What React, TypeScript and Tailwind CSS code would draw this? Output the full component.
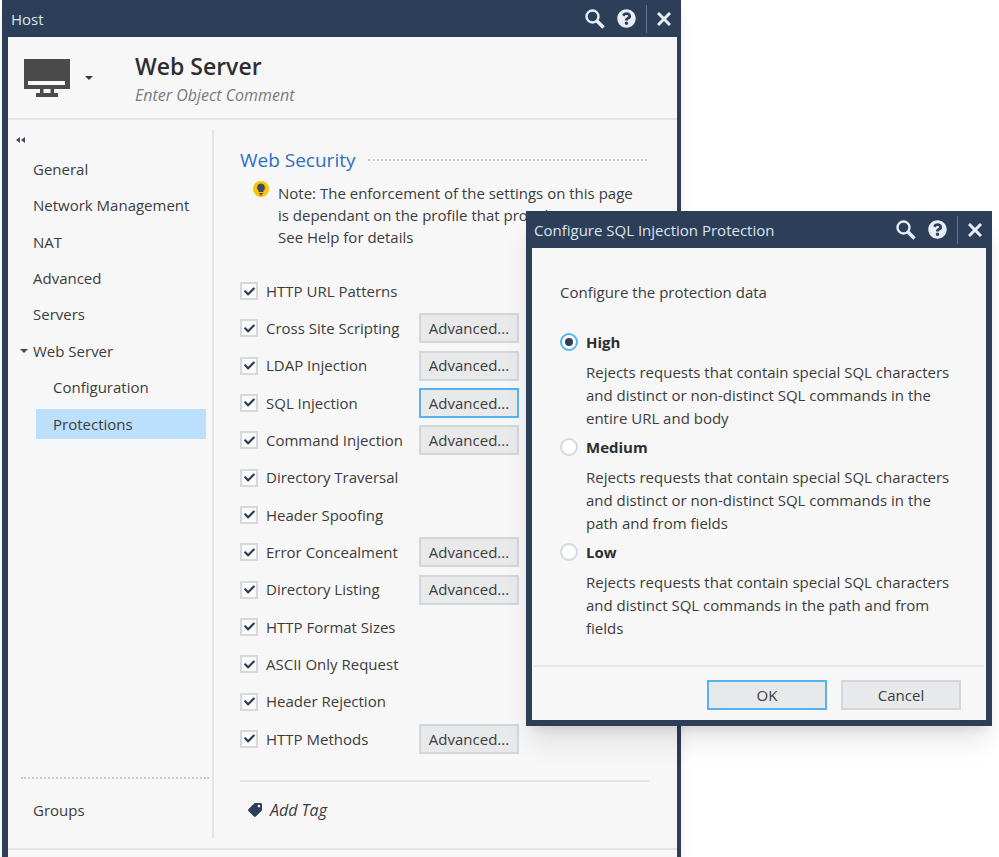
import { FaCheck, FaQuestionCircle, FaTag } from 'react-icons/fa';

const font = { fontFamily: "'Open Sans', sans-serif" };

const navTop = ['General', 'Network Management', 'NAT', 'Advanced', 'Servers'];

const protections = [
  { label: 'HTTP URL Patterns' },
  { label: 'Cross Site Scripting', advanced: true },
  { label: 'LDAP Injection', advanced: true },
  { label: 'SQL Injection', advanced: true, focused: true },
  { label: 'Command Injection', advanced: true },
  { label: 'Directory Traversal' },
  { label: 'Header Spoofing' },
  { label: 'Error Concealment', advanced: true },
  { label: 'Directory Listing', advanced: true },
  { label: 'HTTP Format Sizes' },
  { label: 'ASCII Only Request' },
  { label: 'Header Rejection' },
  { label: 'HTTP Methods', advanced: true },
];

const levels = [
  {
    name: 'High',
    selected: true,
    lines: [
      'Rejects requests that contain special SQL characters',
      'and distinct or non-distinct SQL commands in the',
      'entire URL and body',
    ],
  },
  {
    name: 'Medium',
    lines: [
      'Rejects requests that contain special SQL characters',
      'and distinct or non-distinct SQL commands in the',
      'path and from fields',
    ],
  },
  {
    name: 'Low',
    lines: [
      'Rejects requests that contain special SQL characters',
      'and distinct SQL commands in the path and from',
      'fields',
    ],
  },
];

const TitleIcons = () => (
  <div className="flex items-center text-[#e8eef7]">
    <svg width="20" height="20" viewBox="0 0 20 20" fill="none" stroke="currentColor">
      <circle cx="7.5" cy="7.5" r="6" strokeWidth="2.4" />
      <path d="M12 12l6.5 6.5" strokeWidth="3.6" />
    </svg>
    <FaQuestionCircle size={19} className="ml-3" />
    <div className="mx-2.5 h-7 w-px bg-slate-500" />
    <svg width="14" height="14" viewBox="0 0 14 14" fill="none" stroke="currentColor" strokeWidth="3">
      <path d="M1 1l12 12M13 1L1 13" />
    </svg>
  </div>
);

const Caret = () => <div className="border-x-4 border-t-4 border-x-transparent border-t-[#3a3a3a]" />;

const Monitor = () => (
  <svg width="46" height="38" viewBox="0 0 46 38">
    <path d="M0 0h46v30H0zM16 30h14v4h4v4H12v-4h4z" fill="#4a4a4a" />
    <path d="M4 22h37v4H4zM19.5 30h7v4h-7z" fill="#f7f7f7" />
  </svg>
);

const Bulb = () => (
  <svg width="16" height="16" viewBox="0 0 16 16">
    <circle cx="8" cy="8" r="8" fill="#fdc400" />
    <path d="M8 2.5a4 4 0 0 0-2.4 7.2V11h4.8V9.7A4 4 0 0 0 8 2.5z" fill="#3f4a5a" />
    <path d="M6 12h4v1H6zM6.8 13.6h2.4v1H6.8z" fill="#3f4a5a" />
  </svg>
);

const CollapseArrows = () => (
  <svg width="9" height="6" viewBox="0 0 9 6" fill="#3f4a5a">
    <path d="M4 0v6L0 3zM9 0v6L5 3z" />
  </svg>
);

const Checkbox = () => (
  <div className="flex size-4.5 shrink-0 items-center justify-center border-2 border-[#d5d9df] bg-[#fafafa] text-[#2c3e58]">
    <FaCheck size={11} />
  </div>
);

const Button = ({ children, focused, className }: { children: string; focused?: boolean; className: string }) => (
  <button
    className={`h-7.5 border-2 bg-[#e8e9eb] text-[#3c3c3c] ${
      focused ? 'border-[#55b4f0]' : 'border-[#d3d6da]'
    } ${className}`}
  >
    {children}
  </button>
);

const HostWindow = () => (
  <div className="absolute top-0 bottom-0 left-0.5 flex w-169.75 flex-col border-r-4 border-l-6 border-[#2c3e58] bg-[#f7f7f7] shadow-lg">
    <div className="-mr-1 -ml-1.5 flex h-9.25 shrink-0 items-center justify-between bg-[#2c3e58] pr-2.5 pl-2.25">
      <span className="pt-0.5 text-[#dde4ee]">Host</span>
      <TitleIcons />
    </div>

    <div className="flex h-20.75 shrink-0 items-center border-b-2 border-[#e2e5e9] pl-4">
      <Monitor />
      <div className="mr-10.5 ml-3.75">
        <Caret />
      </div>
      <div className="pt-0.5">
        <h1 className="text-[23px] leading-8 font-semibold text-[#2e2e2e]">Web Server</h1>
        <p className="mt-px text-base leading-6 text-[#7a7a7a] italic">Enter Object Comment</p>
      </div>
    </div>

    <div className="mt-2.5 flex min-h-0 flex-1 flex-col">
      <div className="flex h-177">
        <aside className="flex w-51.5 shrink-0 flex-col border-r-2 border-[#e2e5e9] pt-1">
          <div className="flex h-3 items-center pl-2">
            <CollapseArrows />
          </div>
          <nav className="mt-1.25 mr-1.5 grid h-72.75 grid-rows-8 items-center text-[#3c3c3c]">
            {navTop.map((item) => (
              <div key={item} className="pl-6.25">
                {item}
              </div>
            ))}
            <div className="flex items-center pl-3">
              <div className="mr-1.25 border-x-4 border-t-4 border-x-transparent border-t-[#3f4a5a]" />
              Web Server
            </div>
            <div className="pl-11.25">Configuration</div>
            <div className="ml-7 flex h-7.5 items-center bg-[#bbe0fd] pl-4.25">Protections</div>
          </nav>
          <div className="mt-auto mr-0.75 ml-3.25 border-t-2 border-dotted border-[#c5cad2]" />
          <div className="flex h-14.75 items-center pt-1 pl-6.25 text-[#3c3c3c]">Groups</div>
        </aside>

        <section className="flex min-w-0 flex-1 flex-col pt-4.5 pr-7 pl-6.5">
          <div className="flex items-center">
            <h2 className="text-[19px] leading-6 text-[#2f6fc0]">Web Security</h2>
            <div className="mr-0.5 ml-3.25 flex-1 border-t-2 border-dotted border-[#c5cad2]" />
          </div>
          <div className="mt-2.5 flex pl-3.25 leading-5.5 text-[#3c3c3c]">
            <div className="mr-2.25 -mt-0.25 shrink-0">
              <Bulb />
            </div>
            <p className="whitespace-nowrap">
              Note: The enforcement of the settings on this page
              <br />
              is dependant on the profile that provides
              <br />
              See Help for details
            </p>
          </div>
          <div className="mt-7 flex flex-1 flex-col justify-between text-[#3c3c3c]">
            {protections.map((item) => (
              <div key={item.label} className="flex h-7.5 items-center">
                <Checkbox />
                <span className="ml-2 w-38.25 whitespace-nowrap">{item.label}</span>
                {item.advanced && (
                  <Button focused={item.focused} className="w-25">
                    Advanced...
                  </Button>
                )}
              </div>
            ))}
          </div>
          <div className="mt-6.5 border-t-2 border-[#e2e5e9]" />
          <div className="flex h-14 items-center pl-2 text-base text-[#3c3c3c] italic">
            <FaTag size={14} className="mr-2 -scale-x-100 text-[#2c3e58]" />
            Add Tag
          </div>
        </section>
      </div>
      <div className="mt-2.5 border-t-2 border-[#e2e5e9]" />
    </div>
  </div>
);

const SqlDialog = () => (
  <div className="absolute top-52.75 left-131.5 flex h-128.75 w-116.5 flex-col border-x-6 border-b-6 border-[#2c3e58] bg-[#f7f7f7] shadow-xl">
    <div className="-mx-1.5 flex h-9.25 shrink-0 items-center justify-between bg-[#2c3e58] pr-2.5 pl-2">
      <span className="pt-0.5 text-[#dde4ee]">Configure SQL Injection Protection</span>
      <TitleIcons />
    </div>
    <div className="flex-1 pt-8 pl-7 text-[#3c3c3c]">
      <p className="leading-6">Configure the protection data</p>
      <div className="mt-6.5">
        {levels.map((level) => (
          <div key={level.name}>
            <div className="flex h-6 items-center">
              {level.selected ? (
                <div className="flex size-4.5 items-center justify-center rounded-full border-2 border-[#55b4f0] bg-white">
                  <div className="size-2 rounded-full bg-[#2c3e58]" />
                </div>
              ) : (
                <div className="size-4.5 rounded-full border-2 border-[#d5d9df] bg-white" />
              )}
              <span className="ml-2 font-bold text-[#2e2e2e]">{level.name}</span>
            </div>
            <p className="mt-1.75 mb-1.25 ml-6.5 leading-5.75 whitespace-nowrap">
              {level.lines.map((line) => (
                <span key={line} className="block">
                  {line}
                </span>
              ))}
            </p>
          </div>
        ))}
      </div>
    </div>
    <div className="mx-0.5 flex h-13.75 justify-end gap-3.5 border-t-2 border-[#e2e5e9] pt-3.25 pr-5.75">
      <Button focused className="w-30">
        OK
      </Button>
      <Button className="w-30">Cancel</Button>
    </div>
  </div>
);

export default function App() {
  return (
    <div className="relative h-[857px] w-[999px] overflow-hidden bg-white text-[15px]" style={font}>
      <HostWindow />
      <SqlDialog />
    </div>
  );
}
